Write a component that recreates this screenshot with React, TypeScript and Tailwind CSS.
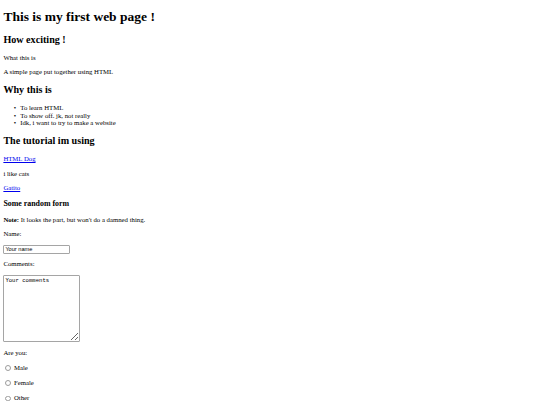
function Bullet({ children }: { children: React.ReactNode }) {
	return (
		<li className="flex">
			<span className="-ml-[6.5px] w-[6.5px] shrink-0">•</span>
			<span>{children}</span>
		</li>
	)
}

function Radio({ label }: { label: string }) {
	return (
		<p className="my-[6.75px] leading-[8.5px] flex items-center">
			<input type="radio" name="sex" className="appearance-none w-[5.5px] h-[5.5px] rounded-full border border-[#9c9c9c] bg-white ml-[2.1px] mr-[3px]" />
			{label}
		</p>
	)
}

export default function App() {
	return (
		<div className="mx-[3.375px] my-[3.375px] font-['Liberation_Serif',serif] text-[6.75px] leading-[7.5px] text-black">
			<h1 className="text-[13.5px] leading-[15.6px] font-bold my-[9.045px]">This is my first web page !</h1>

			<h2 className="text-[10.125px] leading-[11.8px] font-bold my-[8.4px]">How exciting !</h2>
			<p className="my-[6.75px]">What this is</p>
			<p className="my-[6.75px]">A simple page put together using HTML</p>

			<h2 className="text-[10.125px] leading-[11.8px] font-bold my-[8.4px]">Why this is</h2>
			<ul className="my-[6.75px] pl-[16.875px]">
				<Bullet>To learn HTML</Bullet>
				<Bullet>To show off. jk, not really</Bullet>
				<Bullet>Idk, i want to try to make a website</Bullet>
			</ul>

			<h2 className="text-[10.125px] leading-[11.8px] font-bold my-[8.4px]">The tutorial im using</h2>
			<p className="my-[6.75px]">
				<a href="#" className="text-[#0000ee] underline">HTML Dog</a>
			</p>
			<p className="my-[6.75px]">i like cats</p>
			<p className="my-[6.75px]">
				<a href="#" className="text-[#0000ee] underline">Gatito</a>
			</p>

			<h3 className="text-[7.9px] leading-[9.1px] font-bold my-[7.9px]">Some random form</h3>
			<p className="my-[6.75px]">
				<strong>Note:</strong> It looks the part, but won't do a damned thing.
			</p>

			<form onSubmit={(e) => e.preventDefault()}>
				<p className="my-[6.75px]">Name:</p>
				<input
					type="text"
					defaultValue="Your name"
					className="block w-[67px] h-[9px] px-[1px] text-[5.625px] leading-[normal] font-['Liberation_Sans',Arial,sans-serif] text-black border border-[#a5a5a5] rounded-[1px] outline-none"
				/>
				<p className="my-[6.75px]">Comments:</p>
				<textarea
					defaultValue="Your comments"
					className="block w-[77px] h-[67px] p-[1px] text-[5.625px] leading-[normal] font-['Liberation_Mono',monospace] text-black border border-[#a5a5a5] rounded-[1px] outline-none"
				/>
				<p className="mt-[7.8px] mb-[6.75px]">Are you:</p>
				<Radio label="Male" />
				<Radio label="Female" />
				<Radio label="Other" />
			</form>
		</div>
	)
}
